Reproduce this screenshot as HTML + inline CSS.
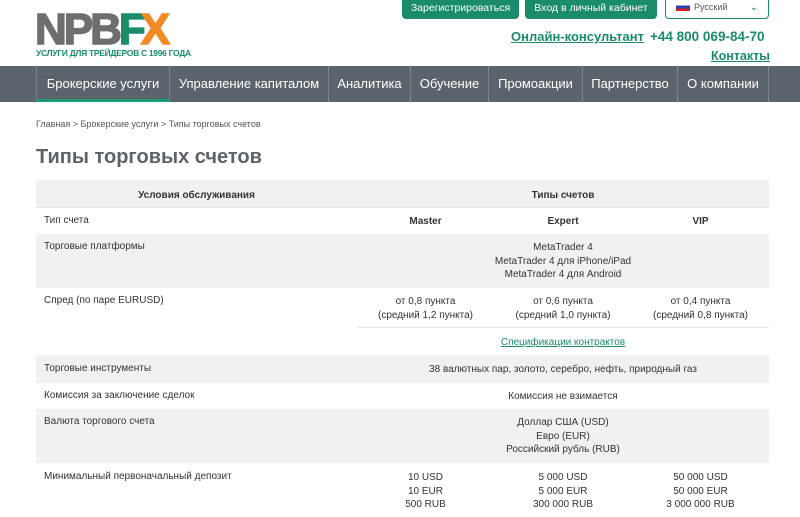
<!DOCTYPE html>
<html><head><meta charset="utf-8"><style>
*{margin:0;padding:0;box-sizing:border-box}
body{width:800px;height:517px;overflow:hidden;background:#fff;font-family:"Liberation Sans","DejaVu Sans",sans-serif;color:#333;position:relative}
.a{position:absolute}
.btn{position:absolute;top:0;height:19px;background:#1a8c6c;color:#fff;font-size:10.5px;text-align:center;line-height:17px;border-radius:0 0 4px 4px}
.nav{position:absolute;top:66px;left:0;width:800px;height:36px;background:#5b636b}
.ni{position:absolute;top:0;height:36px;color:#fff;font-size:13px;line-height:36px;text-align:center;border-left:1px solid #7b838a}
.row{position:absolute;left:36px;width:733px;font-size:10px;color:#333}
.g{background:#f1f1f1}
.c{position:absolute;text-align:center;line-height:13.5px}
.l{position:absolute;left:8px}
</style></head><body>
<div class="a" style="left:35px;top:9px;font-size:44px;font-weight:900;color:#6d6e70;letter-spacing:-3px;line-height:42px;-webkit-text-stroke:1.5px #6d6e70">NPB<span style="color:#1a8c6c;-webkit-text-stroke:1.5px #1a8c6c">F</span><span style="color:#f28a25;-webkit-text-stroke:1.5px #f28a25;margin-left:-2px">X</span></div>
<div class="a" style="left:36px;top:48px;font-size:8.5px;font-weight:bold;color:#1a8c6c;letter-spacing:-0.3px">УСЛУГИ ДЛЯ ТРЕЙДЕРОВ С 1996 ГОДА</div>
<div class="btn" style="left:402px;width:117px">Зарегистрироваться</div>
<div class="btn" style="left:525px;width:132px">Вход в личный кабинет</div>
<div class="a" style="left:665px;top:-1px;width:104px;height:20px;border:1px solid #1a8c6c;border-top:none;border-radius:0 0 4px 4px;font-size:9px;line-height:17px;color:#555"><span style="display:inline-block;width:14px;height:8px;margin:0 4px 0 10px;vertical-align:-1px;background:linear-gradient(#fff 33%,#2a3fb0 33% 66%,#d82020 66%)"></span>Русский<span style="position:absolute;right:10px;top:0;color:#1a8c6c;font-size:10px">&#8964;</span></div>
<div class="a" style="left:511px;top:29px;font-size:13px;font-weight:bold;color:#1a8c6c;text-decoration:underline">Онлайн-консультант</div>
<div class="a" style="left:650px;top:29px;font-size:13.5px;font-weight:bold;color:#1a8c6c">+44 800 069-84-70</div>
<div class="a" style="left:711px;top:49px;font-size:12.5px;font-weight:bold;color:#1a8c6c;text-decoration:underline">Контакты</div>
<div class="nav">
<div class="ni" style="left:36px;width:133px;border-bottom:3px solid #1a9c78">Брокерские услуги</div>
<div class="ni" style="left:169px;width:159px">Управление капиталом</div>
<div class="ni" style="left:328px;width:82px">Аналитика</div>
<div class="ni" style="left:410px;width:78px">Обучение</div>
<div class="ni" style="left:488px;width:94px">Промоакции</div>
<div class="ni" style="left:582px;width:95px">Партнерство</div>
<div class="ni" style="left:677px;width:92px;border-right:1px solid #7b838a">О компании</div>
</div>
<div class="a" style="left:36px;top:119px;font-size:9px;color:#555">Главная &gt; Брокерские услуги &gt; Типы торговых счетов</div>
<div class="a" style="left:36px;top:146px;font-size:20px;font-weight:bold;color:#5b636b">Типы торговых счетов</div>

<div class="row g" style="top:180px;height:28px;font-weight:bold;border-bottom:1px solid #e2e2e2"><div class="c" style="left:0;width:321px;top:9px">Условия обслуживания</div><div class="c" style="left:321px;width:412px;top:9px">Типы счетов</div></div>
<div class="row" style="top:208px;height:26px"><div class="l" style="top:7px">Тип счета</div><div class="c" style="left:321px;width:137px;top:7px;font-weight:bold">Master</div><div class="c" style="left:458px;width:138px;top:7px;font-weight:bold">Expert</div><div class="c" style="left:596px;width:137px;top:7px;font-weight:bold">VIP</div></div>
<div class="row g" style="top:234px;height:54px"><div class="l" style="top:7px">Торговые платформы</div><div class="c" style="left:321px;width:412px;top:7px">MetaTrader 4<br>MetaTrader 4 для iPhone/iPad<br>MetaTrader 4 для Android</div></div>
<div class="row" style="top:288px;height:40px"><div class="l" style="top:7px">Спред (по паре EURUSD)</div><div class="c" style="left:321px;width:137px;top:7px">от 0,8 пункта<br>(средний 1,2 пункта)</div><div class="c" style="left:458px;width:138px;top:7px">от 0,6 пункта<br>(средний 1,0 пункта)</div><div class="c" style="left:596px;width:137px;top:7px">от 0,4 пункта<br>(средний 0,8 пункта)</div><div class="a" style="left:321px;width:412px;top:39px;height:1px;background:#e6e6e6"></div></div>
<div class="row" style="top:328px;height:27px"><div class="c" style="left:321px;width:412px;top:8px;color:#1a8c6c;text-decoration:underline">Спецификации контрактов</div></div>
<div class="row g" style="top:355px;height:28px"><div class="l" style="top:8px">Торговые инструменты</div><div class="c" style="left:321px;width:412px;top:8px">38 валютных пар, золото, серебро, нефть, природный газ</div></div>
<div class="row" style="top:383px;height:26px"><div class="l" style="top:7px">Комиссия за заключение сделок</div><div class="c" style="left:321px;width:412px;top:7px">Комиссия не взимается</div></div>
<div class="row g" style="top:409px;height:54px"><div class="l" style="top:7px">Валюта торгового счета</div><div class="c" style="left:321px;width:412px;top:7px">Доллар США (USD)<br>Евро (EUR)<br>Российский рубль (RUB)</div></div>
<div class="row" style="top:463px;height:54px"><div class="l" style="top:8px">Минимальный первоначальный депозит</div><div class="c" style="left:321px;width:137px;top:8px">10 USD<br>10 EUR<br>500 RUB</div><div class="c" style="left:458px;width:138px;top:8px">5 000 USD<br>5 000 EUR<br>300 000 RUB</div><div class="c" style="left:596px;width:137px;top:8px">50 000 USD<br>50 000 EUR<br>3 000 000 RUB</div></div>
</body></html>
